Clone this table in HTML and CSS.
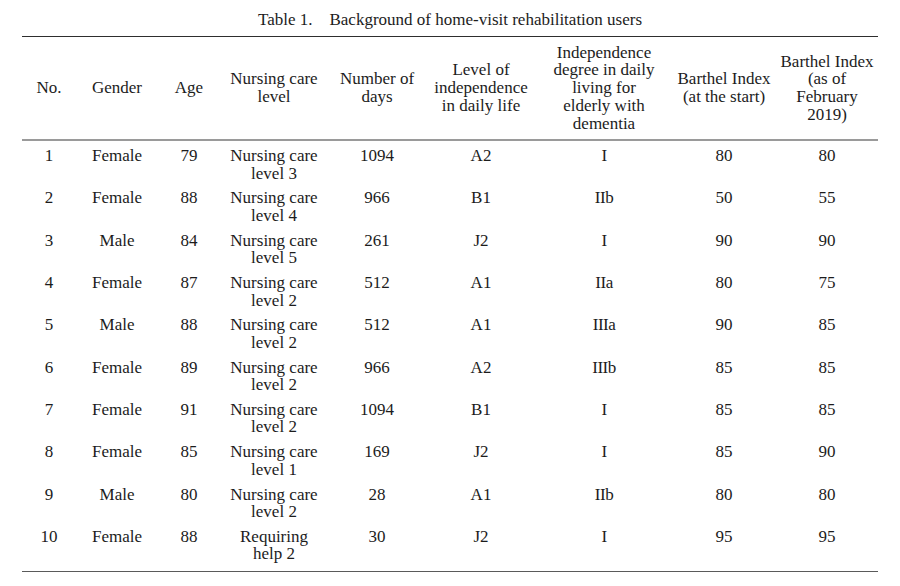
FILE: index.html
```html
<!DOCTYPE html>
<html lang="en">
<head>
<meta charset="utf-8">
<title>Table 1. Background of home-visit rehabilitation users</title>
<link rel="stylesheet" href="styles.css">
</head>
<body>
<div class="page">
  <div class="caption">Table 1.<span class="gap"></span>Background of home-visit rehabilitation users</div>
  <table class="data">
    <colgroup>
      <col class="c1"><col class="c2"><col class="c3"><col class="c4"><col class="c5"><col class="c6"><col class="c7"><col class="c8"><col class="c9">
    </colgroup>
    <thead>
      <tr>
        <th>No.</th>
        <th>Gender</th>
        <th>Age</th>
        <th>Nursing care<br>level</th>
        <th>Number of<br>days</th>
        <th>Level of<br>independence<br>in daily life</th>
        <th>Independence<br>degree in daily<br>living for<br>elderly with<br>dementia</th>
        <th>Barthel Index<br>(at the start)</th>
        <th>Barthel Index<br>(as of<br>February<br>2019)</th>
      </tr>
    </thead>
    <tbody>
      <tr><td>1</td><td>Female</td><td>79</td><td>Nursing care<br>level 3</td><td>1094</td><td>A2</td><td class="rn">I</td><td>80</td><td>80</td></tr>
      <tr><td>2</td><td>Female</td><td>88</td><td>Nursing care<br>level 4</td><td>966</td><td>B1</td><td class="rn">IIb</td><td>50</td><td>55</td></tr>
      <tr><td>3</td><td>Male</td><td>84</td><td>Nursing care<br>level 5</td><td>261</td><td>J2</td><td class="rn">I</td><td>90</td><td>90</td></tr>
      <tr><td>4</td><td>Female</td><td>87</td><td>Nursing care<br>level 2</td><td>512</td><td>A1</td><td class="rn">IIa</td><td>80</td><td>75</td></tr>
      <tr><td>5</td><td>Male</td><td>88</td><td>Nursing care<br>level 2</td><td>512</td><td>A1</td><td class="rn">IIIa</td><td>90</td><td>85</td></tr>
      <tr><td>6</td><td>Female</td><td>89</td><td>Nursing care<br>level 2</td><td>966</td><td>A2</td><td class="rn">IIIb</td><td>85</td><td>85</td></tr>
      <tr><td>7</td><td>Female</td><td>91</td><td>Nursing care<br>level 2</td><td>1094</td><td>B1</td><td class="rn">I</td><td>85</td><td>85</td></tr>
      <tr><td>8</td><td>Female</td><td>85</td><td>Nursing care<br>level 1</td><td>169</td><td>J2</td><td class="rn">I</td><td>85</td><td>90</td></tr>
      <tr><td>9</td><td>Male</td><td>80</td><td>Nursing care<br>level 2</td><td>28</td><td>A1</td><td class="rn">IIb</td><td>80</td><td>80</td></tr>
      <tr class="last"><td>10</td><td>Female</td><td>88</td><td>Requiring<br>help 2</td><td>30</td><td>J2</td><td class="rn">I</td><td>95</td><td>95</td></tr>
    </tbody>
  </table>
</div>
</body>
</html>
```
FILE: styles.css
```css
html, body {
  margin: 0;
  padding: 0;
  background: #ffffff;
}

.page {
  width: 900px;
  height: 586px;
  font-family: "Liberation Serif", "Times New Roman", serif;
  font-size: 17px;
  color: #1c1c1c;
}

.caption {
  height: 36px;
  box-sizing: border-box;
  padding-top: 10px;
  line-height: 20px;
  text-align: center;
  white-space: nowrap;
}

.caption .gap {
  display: inline-block;
  width: 17px;
}

.data {
  margin: 0 22px;
  width: 856px;
  table-layout: fixed;
  border-collapse: separate;
  border-spacing: 0;
  border-top: 1px solid #2e2e2e;
}

.c1 { width: 54px; }
.c2 { width: 82px; }
.c3 { width: 62px; }
.c4 { width: 108px; }
.c5 { width: 98px; }
.c6 { width: 110px; }
.c7 { width: 136px; }
.c8 { width: 104px; }
.c9 { width: 102px; }

.data th {
  height: 104px;
  box-sizing: border-box;
  padding: 0;
  font-weight: normal;
  text-align: center;
  vertical-align: middle;
  line-height: 17.7px;
  white-space: nowrap;
  border-bottom: 2px solid #9a9a9a;
}

.data td {
  padding: 6px 0 1.13px;
  text-align: center;
  vertical-align: top;
  line-height: 17.6px;
  white-space: nowrap;
}

.data .rn {
  letter-spacing: -0.5px;
}

.data tr.last td {
  padding-bottom: 7.8px;
  border-bottom: 1px solid #5a5a5a;
}
```
